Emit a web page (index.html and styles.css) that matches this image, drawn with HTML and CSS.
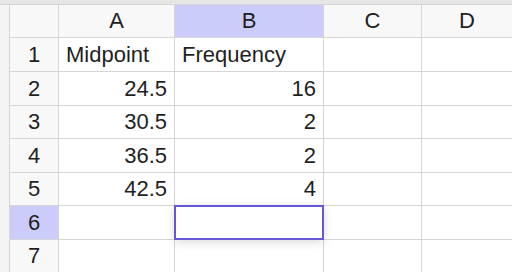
FILE: index.html
```html
<!DOCTYPE html>
<html lang="en">
<head>
    <meta charset="UTF-8">
    <title>Spreadsheet</title>
    <link rel="stylesheet" href="styles.css">
</head>
<body>
    <div class="top-band"></div>
    <div class="sheet">
        <div class="gutter"></div>
        <div class="grid">
            <div class="corner"></div>
            <div class="col-head">A</div>
            <div class="col-head active">B</div>
            <div class="col-head">C</div>
            <div class="col-head">D</div>

            <div class="row-head">1</div>
            <div class="cell">Midpoint</div>
            <div class="cell">Frequency</div>
            <div class="cell"></div>
            <div class="cell"></div>

            <div class="row-head">2</div>
            <div class="cell num">24.5</div>
            <div class="cell num">16</div>
            <div class="cell"></div>
            <div class="cell"></div>

            <div class="row-head">3</div>
            <div class="cell num">30.5</div>
            <div class="cell num">2</div>
            <div class="cell"></div>
            <div class="cell"></div>

            <div class="row-head">4</div>
            <div class="cell num">36.5</div>
            <div class="cell num">2</div>
            <div class="cell"></div>
            <div class="cell"></div>

            <div class="row-head">5</div>
            <div class="cell num">42.5</div>
            <div class="cell num">4</div>
            <div class="cell"></div>
            <div class="cell"></div>

            <div class="row-head active">6</div>
            <div class="cell"></div>
            <div class="cell selected"></div>
            <div class="cell"></div>
            <div class="cell"></div>

            <div class="row-head">7</div>
            <div class="cell"></div>
            <div class="cell"></div>
            <div class="cell"></div>
            <div class="cell"></div>
        </div>
    </div>
</body>
</html>
```

FILE: styles.css
```css
* {
    margin: 0;
    padding: 0;
    box-sizing: border-box;
}

html, body {
    width: 512px;
    height: 272px;
    overflow: hidden;
}

body {
    font-family: "Liberation Sans", Arial, sans-serif;
    font-size: 22px;
    color: #1f1f1f;
    background: #ffffff;
    display: flex;
    flex-direction: column;
}

.top-band {
    height: 5px;
    background: #e6e6e6;
    border-bottom: 1px solid #d6d6d6;
    flex-shrink: 0;
}

.sheet {
    display: flex;
    flex: 1;
}

.gutter {
    width: 10px;
    background: #f4f4f4;
    border-right: 1px solid #d6d6d6;
    flex-shrink: 0;
}

.grid {
    flex: 1;
    display: grid;
    grid-template-columns: 48px 115px 148px 97px 1fr;
    grid-template-rows: 32px 33px 33px 32px 33px 32px 33px 1fr;
    gap: 1px;
    background: #d6d6d6;
}

.corner,
.col-head,
.row-head {
    background: #f8f8f8;
    display: flex;
    align-items: center;
    justify-content: center;
}

.col-head.active,
.row-head.active {
    background: #ccccfa;
}

.cell {
    background: #ffffff;
    display: flex;
    align-items: center;
    padding: 0 7px;
    white-space: nowrap;
}

.cell.num {
    justify-content: flex-end;
}

.cell.selected {
    position: relative;
    z-index: 1;
    outline: 2px solid #6657d4;
    outline-offset: -1px;
    box-shadow: 0 2px 10px rgba(0, 0, 0, 0.18);
}
```
